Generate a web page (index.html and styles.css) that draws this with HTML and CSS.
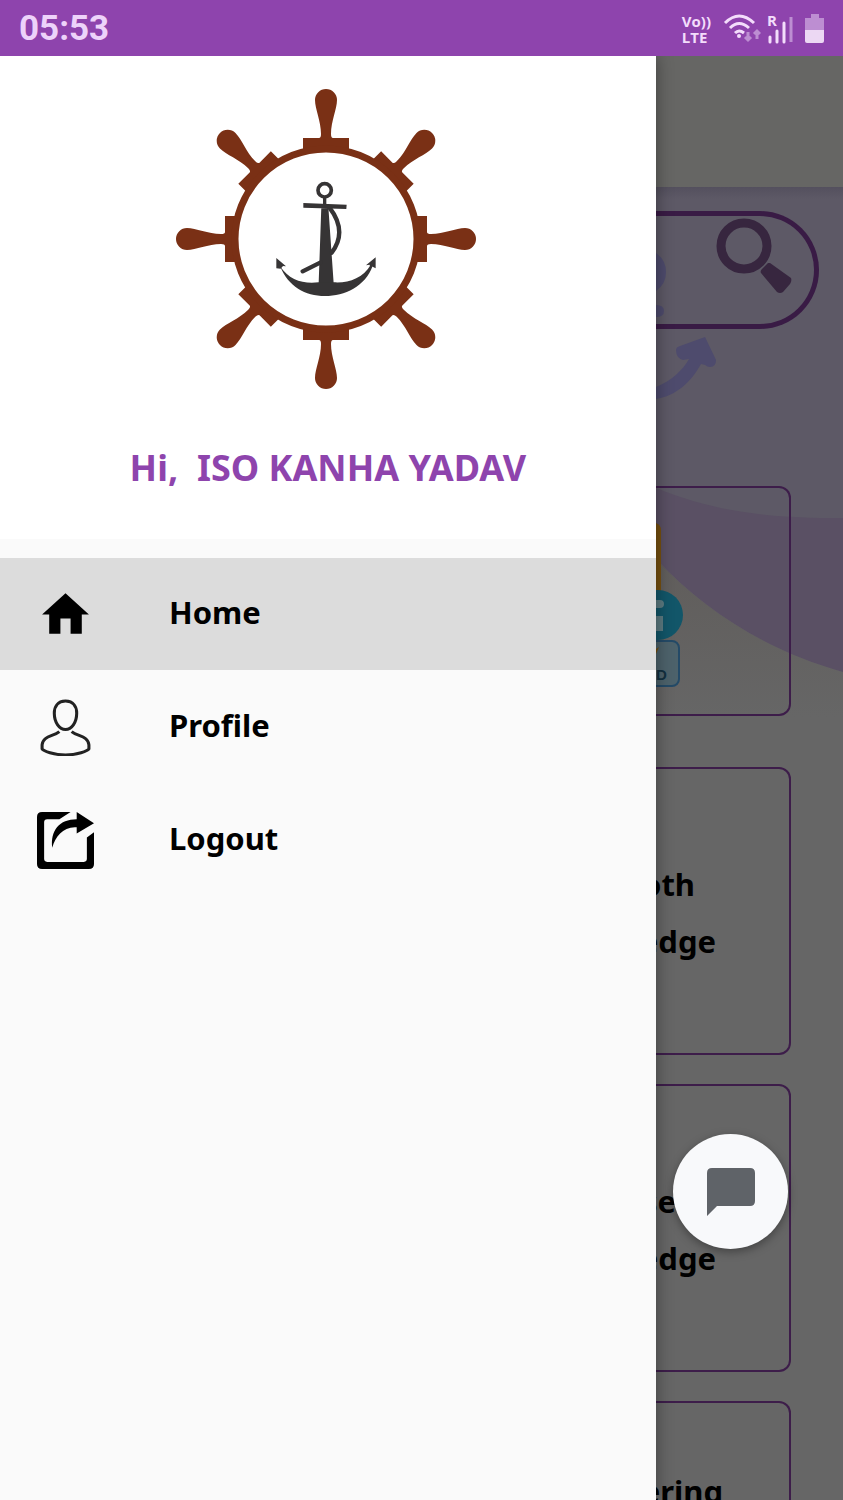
FILE: index.html
```html
<!DOCTYPE html>
<html lang="en">
<head>
<meta charset="utf-8">
<meta name="viewport" content="width=device-width, initial-scale=1">
<title>Home</title>
<link rel="stylesheet" href="styles.css">
</head>
<body>
<div class="screen">
  <header class="status">
    <time class="clock">05:53</time>
    <div class="indicators">
      <div class="volte"><span>Vo))</span><span>LTE</span></div>
      <svg class="wifi" width="38" height="30" viewBox="0 0 38 30" fill="none" stroke="#f3ddfb" stroke-width="3">
        <path d="M2 9Q16-5 31 9M7 14Q16 5 26 14M12 19Q16 15 21 19"/>
        <circle cx="16" cy="22" r="2" fill="#f3ddfb" stroke="none"/>
        <g stroke="#bd8ed2" stroke-width="3"><path d="M25 18v8M22 23l3 3 3-3M34 25v-8M31 20l3-3 3 3"/></g>
      </svg>
      <svg class="signal" width="26" height="30" viewBox="0 0 26 30">
        <text x="0" y="12" class="roam">R</text>
        <path d="M3 23v5M10 17v11M17 9v19" stroke="#f3ddfb" stroke-width="3" stroke-linecap="round"/>
        <path d="M24 3v25" stroke="#bd8ed2" stroke-width="3"/>
      </svg>
      <svg class="battery" width="20" height="30" viewBox="0 0 20 30">
        <path d="M6 0h8v4h5v13H0V4h6z" fill="#bd8ed2"/>
        <path d="M0 16h19v11q0 2-2 2H2q-2 0-2-2z" fill="#ecd8f3"/>
      </svg>
    </div>
  </header>

  <div class="body">
    <aside class="drawer">
      <div class="profile">
        <svg class="logo" viewBox="-151 -151 302 302" role="img" aria-label="Ship wheel with anchor">
          <defs>
            <g id="spoke"><path d="M-23-84V-101H-7Q-5-101-5-105C-5-118-11-130-11-139A11 11 0 0 1 11-139C11-130 5-118 5-105Q5-101 7-101H23V-84Z"/></g>
          </defs>
          <g fill="#7a3015">
            <use href="#spoke"/><use href="#spoke" transform="rotate(45)"/><use href="#spoke" transform="rotate(90)"/><use href="#spoke" transform="rotate(135)"/>
            <use href="#spoke" transform="rotate(180)"/><use href="#spoke" transform="rotate(225)"/><use href="#spoke" transform="rotate(270)"/><use href="#spoke" transform="rotate(315)"/>
          </g>
          <ellipse rx="91" ry="90" fill="#fff" stroke="#7a3015" stroke-width="7"/>
          <g transform="translate(-66 -69) scale(.3333)" fill="#363435">
            <circle cx="194" cy="61" r="20" fill="none" stroke="#363435" stroke-width="11"/>
            <path d="M189 84h10v18l6 8 16 230h-45l8-230 5-8zM130 99l130 5-1 13-129-4z"/>
            <path d="M208 112C245 160 248 205 215 248M182 277L128 304" fill="none" stroke="#363435" stroke-width="13" stroke-linecap="round"/>
            <path d="M60 288C88 332 130 342 176 337H221C265 340 308 325 332 285L338 288C315 350 255 378 195 378C135 378 85 350 60 288ZM49 264L78 289 69 288 62 296 49 295ZM347 262V295L338 290 330 292 329 284 318 286Z"/>
          </g>
        </svg>
        <h1 class="greeting">Hi,&nbsp; ISO KANHA YADAV</h1>
      </div>
      <nav class="menu">
        <a class="item active" href="#home">
          <svg class="icon" viewBox="0 0 56 56"><path d="M28 7L51 28H44V47H33V32H23V47H12V28H5Z"/></svg>
          <span class="label">Home</span>
        </a>
        <a class="item" href="#profile">
          <svg class="icon" viewBox="0 0 56 56" fill="none" stroke="#222" stroke-width="3"><path d="M28 2C20 2 17 8 17 14C17 23 22 30 28 30S39 23 39 14C39 8 36 2 28 2Z"/><path d="M22 32C16 37 6 36 5 45V49C6 51 17 55 28 55S50 51 51 49V45C50 36 40 37 34 32"/></svg>
          <span class="label">Profile</span>
        </a>
        <a class="item" href="#logout">
          <svg class="icon" viewBox="0 0 56 56"><path d="M5 0H33L22 7H10Q7 7 7 10V46Q7 49 10 49H46Q49 49 49 46V25L56 20V51Q56 56 51 56H5Q0 56 0 51V5Q0 0 5 0Z"/><path d="M39 0L56 11 39 21V15C26 14 18 24 15 35C13 18 22 7 39 7Z"/></svg>
          <span class="label">Logout</span>
        </a>
      </nav>
    </aside>

    <main class="page">
      <div class="toolbar"></div>
      <svg class="waves" viewBox="0 0 187 540" preserveAspectRatio="none">
        <defs>
          <linearGradient id="haze" x1="0" y1="0" x2="0" y2="1"><stop offset="0" stop-color="#605d5b"/><stop offset="1" stop-color="#666"/></linearGradient>
          <linearGradient id="edge" x1="0" y1="0" x2="0" y2="1"><stop offset="0" stop-color="#54505e"/><stop offset="1" stop-color="#5d5966"/></linearGradient>
        </defs>
        <path d="M0 372C50 425 110 463 187 485V530H0Z" fill="url(#haze)"/>
        <path d="M0 0H187V485C110 463 50 425 0 372Z" fill="#5a5064"/>
        <path d="M0 0H187V331C110 331 60 325 0 301Z" fill="#5d5966"/>
        <path d="M0 0H187V12H0Z" fill="url(#edge)"/>
        <g fill="#4e4b6d">
          <path d="M0 66Q10 73 10 85T0 104ZM0 118Q8 118 8 124T0 130ZM0 200C15 194 27 183 33 172L27 173Q20 171 20 163Q20 160 24 159L49 150L60 173Q60 180 54 180Q51 180 49 178L45 177C35 195 20 209 0 212Z"/>
        </g>
      </svg>
      <div class="content">
        <div class="search">
          <button class="find" aria-label="Search">
            <svg viewBox="0 0 76 76"><circle cx="28" cy="28" r="23" fill="none" stroke="#37263f" stroke-width="9"/><path d="M54 45L75 60Q76 63 74 66L67 74Q64 76 61 74L45 55Q44 53 46 51L52 45Z" fill="#37263f"/></svg>
          </button>
        </div>
        <section class="card intro">
          <svg class="art" viewBox="0 0 30 168" role="img" aria-label="Information">
            <path d="M0 0Q5 2 5 7V75H0Z" fill="#76500f"/>
            <circle cx="2" cy="92" r="25" fill="#125669"/>
            <path d="M0 77H4Q8 77 8 81T4 85H0ZM0 93H7V108H0Z" fill="#5c7a80"/>
            <rect x="-20" y="118" width="43" height="45" rx="7" fill="#4d626b" stroke="#244a67" stroke-width="2"/>
            <path d="M0 126L3 124 0 131Z" fill="#76500f"/>
            <text x="0" y="157" class="badge">D</text>
          </svg>
        </section>
        <div class="topics">
          <section class="card topic"><span class="short">oth</span><span class="long">edge</span></section>
          <section class="card topic"><span class="tiny">se</span><span class="long">edge</span></section>
          <section class="card topic tall"><span class="wide">ering</span></section>
        </div>
      </div>
      <button class="chat" aria-label="Chat">
        <svg viewBox="0 0 48 48"><path d="M5 0H43Q48 0 48 5V33Q48 38 43 38H10L0 48V5Q0 0 5 0Z" fill="#5f6368"/></svg>
      </button>
    </main>
  </div>
</div>
</body>
</html>
```
FILE: styles.css
```css
* { box-sizing: border-box; }
body { margin: 0; font-family: "Noto Sans", "Open Sans", sans-serif; }
svg { display: block; }
button { border: 0; padding: 0; background: none; cursor: pointer; }

.screen { display: flex; flex-direction: column; height: 100vh; overflow: hidden; }

.status {
  position: relative; z-index: 2;
  display: flex; align-items: center; justify-content: space-between;
  flex: none; height: 56px; padding: 2px 18px 0 19px;
  background: #8e44ad; color: #edd3fa;
}
.clock { font: 700 35px/54px Roboto, sans-serif; }
.indicators { display: flex; align-items: center; gap: 6px; }
.volte {
  display: flex; flex-direction: column;
  margin-right: 6px;
  font: 700 15px/16px "Open Sans", sans-serif; color: #f3ddfb;
}
.signal { overflow: visible; }
.roam { font: 700 15px "Open Sans", sans-serif; fill: #f3ddfb; }
.battery { margin-left: 6px; }

.body { display: flex; flex: 1; min-height: 0; }

.drawer {
  position: relative; z-index: 1;
  flex: none; width: 77.8%;
  background: #fafafa;
  box-shadow: 0 0 16px rgba(0, 0, 0, .4);
}
.profile {
  display: flex; flex-direction: column; align-items: center;
  height: 483px; padding-top: 32px;
  background: #fff;
}
.logo { width: 302px; height: 302px; margin-right: 4px; }
.greeting { margin: 52px 0 0; font-size: 36px; line-height: 52px; font-weight: 700; color: #8e44ad; }
.menu { display: flex; flex-direction: column; gap: 1px; padding-top: 19px; }
.item {
  display: flex; align-items: center; gap: 75px;
  height: 112px; padding: 0 37px;
  color: #000; text-decoration: none;
  font-size: 31px; font-weight: 700; line-height: 40px;
}
.label { padding-bottom: 5px; }
.active { background: #dcdcdc; }
.icon { flex: none; width: 57px; height: 57px; }

.page { position: relative; flex: 1; min-width: 0; overflow: hidden; background: #666; }
.toolbar { height: 131px; background: #666664; }
.waves { position: absolute; top: 131px; left: 0; width: 100%; height: 540px; }
.content { position: relative; padding: 24px 24px 0 0; }
.search {
  display: flex; justify-content: flex-end;
  height: 118px; padding: 2px 22px 0 0;
  border: 5px solid #391b45; border-left: 0;
  border-radius: 0 59px 59px 0;
}
.find { width: 76px; height: 76px; }
.card {
  margin-right: 28px;
  border: 2px solid #3d1d4a; border-left: 0;
  border-radius: 0 12px 12px 0;
}
.intro { height: 230px; margin-top: 157px; padding-top: 35px; }
.art { width: 30px; height: 168px; }
.badge { font: 700 15px "Liberation Sans", sans-serif; fill: #12303f; }
.topics { display: flex; flex-direction: column; gap: 29px; margin-top: 51px; }
.topic {
  display: flex; flex-direction: column; align-items: flex-end;
  height: 288px; padding-top: 87px;
  font-size: 31px; line-height: 57px; font-weight: 700; color: #000;
}
.tall { padding-top: 60px; }
.short { padding-right: 94px; }
.long { padding-right: 73px; }
.tiny { padding-right: 113px; }
.wide { padding-right: 66px; }

.chat {
  position: absolute; right: 55px; bottom: 251px;
  display: flex; align-items: center; justify-content: center;
  width: 115px; height: 115px; border-radius: 50%;
  background: #f8f9fb;
  box-shadow: 0 3px 10px rgba(0, 0, 0, .35);
}
.chat svg { width: 48px; height: 48px; }
```
